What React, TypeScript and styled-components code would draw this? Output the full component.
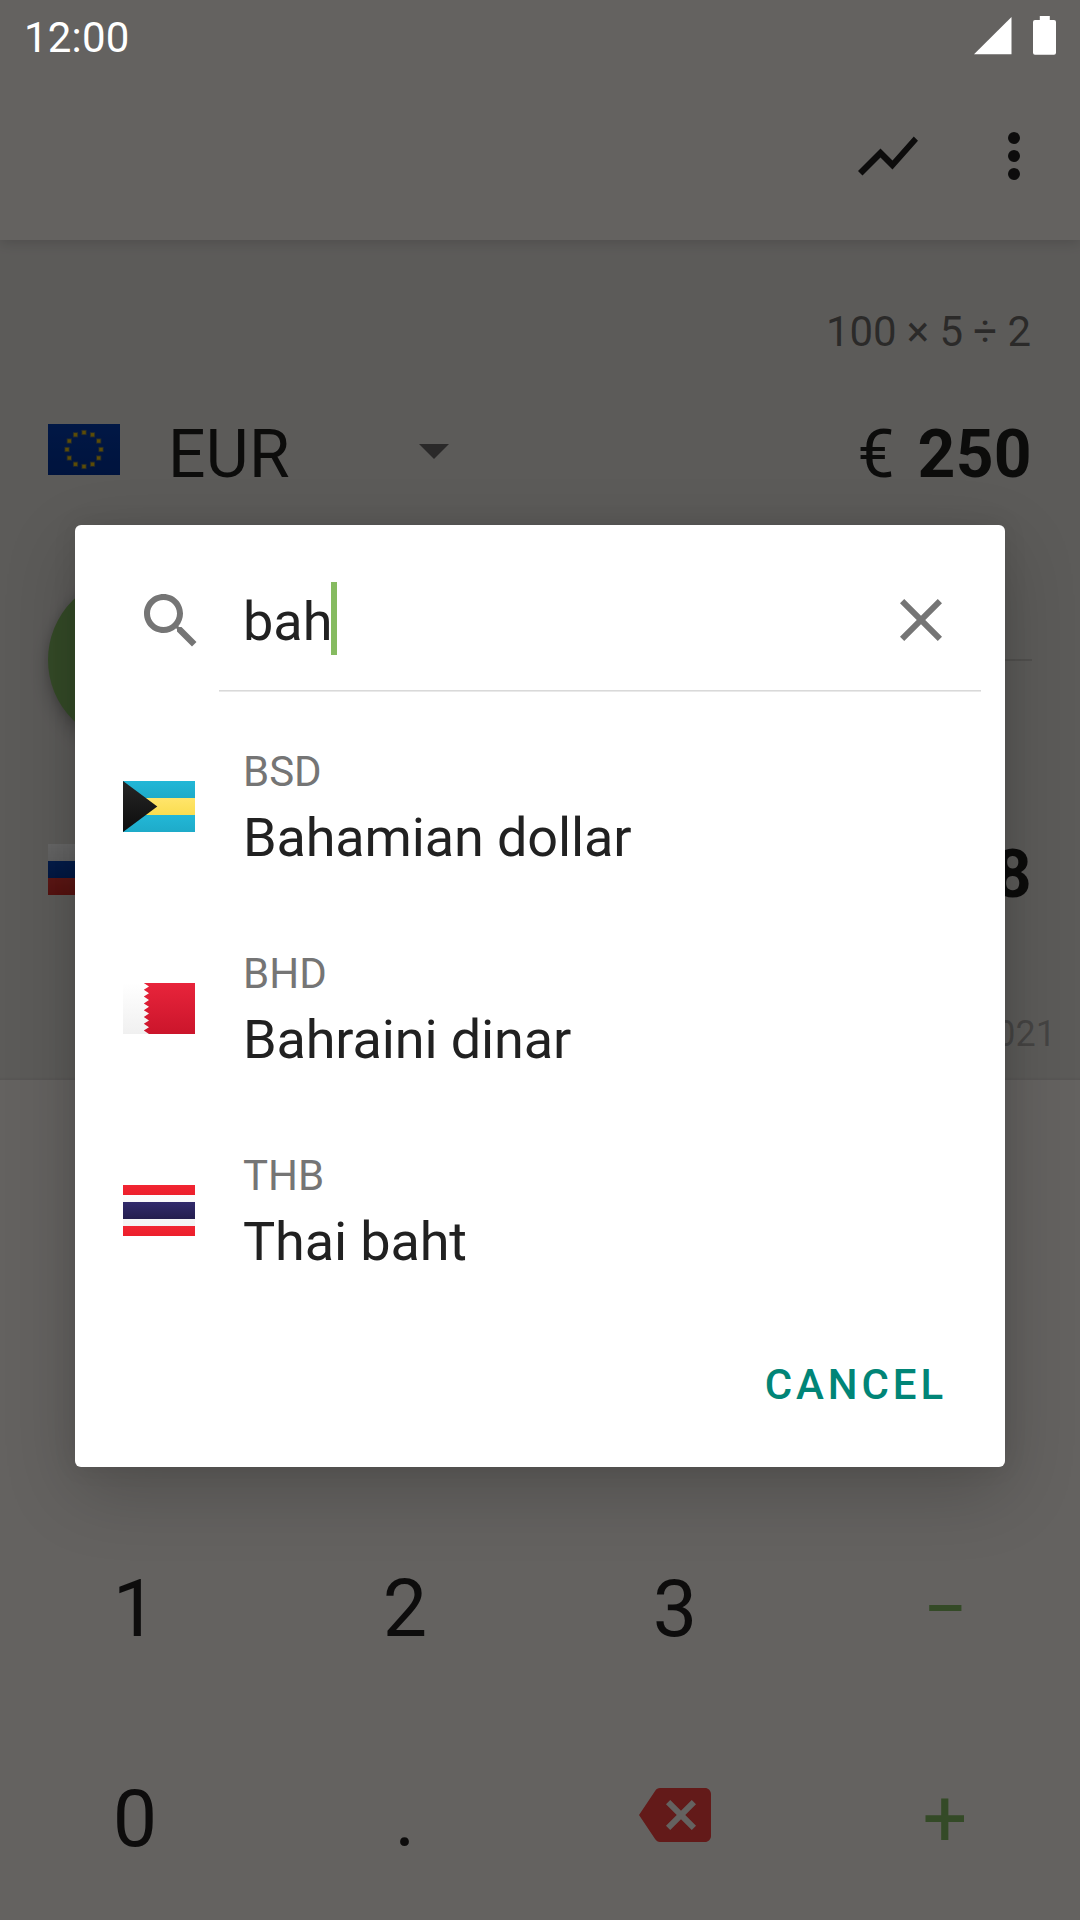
import React from "react";
import styled, { createGlobalStyle } from "styled-components";

const Global = createGlobalStyle`
  * { box-sizing: border-box; }
  body { margin: 0; font-family: Roboto, "Liberation Sans", sans-serif; }
`;

const Screen = styled.div`
  position: relative;
  width: 1080px;
  height: 1920px;
  overflow: hidden;
  display: flex;
  flex-direction: column;
  background: #faf6f1;
  color: rgba(0, 0, 0, 0.87);
`;

const Toolbar = styled.header`
  flex: none;
  height: 240px;
  padding: 120px 30px 48px;
  display: flex;
  justify-content: flex-end;
  gap: 54px;
  z-index: 1;
  background: #faf6f1;
  box-shadow: 0 3px 12px rgba(0, 0, 0, 0.14);
`;

const Icon = styled.svg<{ $size?: number; $color?: string }>`
  display: block;
  flex: none;
  width: ${(p) => p.$size ?? 72}px;
  height: ${(p) => p.$size ?? 72}px;
  fill: ${(p) => p.$color ?? "rgba(0, 0, 0, 0.87)"};
`;

const Converter = styled.section`
  flex: none;
  height: 840px;
  padding: 68px 48px 0;
  display: flex;
  flex-direction: column;
  background: #e6e3df;
  box-shadow: inset 0 -3px 3px -2px rgba(0, 0, 0, 0.08);
`;

const Expression = styled.div`
  height: 48px;
  margin-right: 1px;
  line-height: 48px;
  font-size: 42px;
  letter-spacing: -0.1px;
  text-align: right;
  color: rgba(0, 0, 0, 0.54);
`;

const CurrencyRow = styled.div<{ $top: number }>`
  display: flex;
  height: 78px;
  margin-top: ${(p) => p.$top}px;
  line-height: 81px;
  font-size: 66px;
`;

const FlagSvg = styled.svg<{ $top?: number }>`
  display: block;
  flex: none;
  width: 72px;
  height: 51px;
  margin-top: ${(p) => p.$top ?? 0}px;
`;

const Code = styled.span`
  width: 239px;
  margin-left: 48px;
  letter-spacing: 0.3px;
`;

const Amount = styled.span`
  margin-left: auto;
  display: flex;
  gap: 23px;
`;

const Bold = styled.b`
  font-weight: 700;
  letter-spacing: 0.3px;
`;

const SwapRow = styled.div`
  display: flex;
  align-items: center;
  height: 168px;
  margin-top: 84px;
`;

const SwapButton = styled.div`
  width: 168px;
  height: 168px;
  border-radius: 50%;
  background: #83b962;
  box-shadow: 0 9px 18px rgba(0, 0, 0, 0.24), 0 0 9px rgba(0, 0, 0, 0.1);
`;

const SwapDivider = styled.div`
  flex: 1;
  height: 2px;
  margin-left: 48px;
  background: rgba(0, 0, 0, 0.12);
`;

const UpdateDate = styled.div`
  margin: 101px -24px 0 0;
  height: 42px;
  line-height: 42px;
  font-size: 36px;
  text-align: right;
  color: rgba(0, 0, 0, 0.26);
`;

const Keypad = styled.div`
  flex: 1;
  display: grid;
  grid-template-columns: repeat(4, 270px);
  grid-auto-rows: 210px;
  align-content: end;
`;

const Key = styled.div<{ $accent?: boolean }>`
  display: flex;
  align-items: center;
  justify-content: center;
  padding-top: 8px;
  font-size: 79px;
  line-height: 94px;
  color: ${(p) => (p.$accent ? "#83b962" : "inherit")};
`;

const IconKey = styled(Key)`
  padding-top: 0;
`;

const Scrim = styled.div`
  position: absolute;
  inset: 0;
  z-index: 2;
  background: rgba(0, 0, 0, 0.6);
`;

const StatusBar = styled.div`
  position: absolute;
  inset: 0 0 auto 0;
  z-index: 3;
  height: 72px;
  padding: 13px 24px 0 24px;
  display: flex;
  justify-content: space-between;
  font-size: 42px;
  line-height: 49px;
  letter-spacing: 0.2px;
  color: #fff;
`;

const StatusIcons = styled.svg`
  display: block;
  width: 90px;
  height: 48px;
  fill: #fff;
`;

const Dialog = styled.div`
  position: absolute;
  left: 75px;
  top: 525px;
  z-index: 4;
  width: 930px;
  height: 942px;
  border-radius: 6px;
  display: flex;
  flex-direction: column;
  background: #fff;
  color: #212121;
  box-shadow: 0 24px 72px rgba(0, 0, 0, 0.2), 0 0 24px rgba(0, 0, 0, 0.08);
`;

const SearchRow = styled.div`
  display: flex;
  height: 165px;
  padding: 57px 48px 0 60px;
`;

const Query = styled.div`
  flex: 1;
  display: flex;
  height: 73px;
  margin-left: 36px;
  line-height: 80px;
  font-size: 54px;
`;

const Caret = styled.span`
  width: 6px;
  height: 73px;
  margin-left: -1px;
  background: #86bb60;
`;

const SearchIcon = styled(Icon)`
  margin-top: 3px;
`;

const ClearIcon = styled(Icon)`
  margin-top: 1.5px;
`;

const Rule = styled.div`
  height: 2px;
  margin: 0 24px 13px 144px;
  background: linear-gradient(#d9d9d9 50%, #e9e9e9 50%);
`;

const Item = styled.div`
  display: flex;
  align-items: center;
  height: 202px;
  padding-left: 48px;
  gap: 48px;
`;

const ItemText = styled.div`
  display: flex;
  flex-direction: column;
  padding-top: 4px;
`;

const ItemCode = styled.span`
  font-size: 42px;
  line-height: 50px;
  margin-bottom: 9px;
  color: #757575;
`;

const ItemName = styled.span`
  font-size: 54px;
  line-height: 64px;
  letter-spacing: -0.13px;
`;

const Actions = styled.div`
  display: flex;
  justify-content: flex-end;
  padding: 49px 58px 0 0;
`;

const Cancel = styled.span`
  font-size: 42px;
  line-height: 50px;
  font-weight: 500;
  letter-spacing: 3.9px;
  color: #018577;
`;

const Gradient = ({ id, from, to }: { id: string; from: string; to: string }) => (
  <linearGradient id={id} x1="0" y1="0" x2="0" y2="1">
    <stop offset="0" stopColor={from} />
    <stop offset="1" stopColor={to} />
  </linearGradient>
);

const EuFlag = () => (
  <FlagSvg viewBox="0 0 72 51" $top={10}>
    <defs>
      <Gradient id="eu" from="#043cae" to="#00319a" />
    </defs>
    <rect width="72" height="51" fill="url(#eu)" />
    {Array.from({ length: 12 }, (_, i) => {
      const a = (i * Math.PI) / 6;
      return (
        <g key={i} transform={`translate(${36 + 17 * Math.sin(a)} ${25.5 - 17 * Math.cos(a)})`}>
          <rect x="-2.6" y="-2.6" width="5.2" height="5.2" fill="#ffcc00" opacity="0.35" />
          <rect x="-1.7" y="-1.7" width="3.4" height="3.4" fill="#ffcc00" opacity="0.85" />
        </g>
      );
    })}
  </FlagSvg>
);

const RuFlag = () => (
  <FlagSvg viewBox="0 0 72 51" $top={10}>
    <defs>
      <Gradient id="ruw" from="#ffffff" to="#f0f0f0" />
      <Gradient id="rub" from="#0c47b7" to="#073da4" />
      <Gradient id="rur" from="#e53b35" to="#d32e28" />
    </defs>
    <rect width="72" height="17" fill="url(#ruw)" />
    <rect y="17" width="72" height="17" fill="url(#rub)" />
    <rect y="34" width="72" height="17" fill="url(#rur)" />
  </FlagSvg>
);

const BahamasFlag = () => (
  <FlagSvg viewBox="0 0 72 51">
    <defs>
      <Gradient id="bsc" from="#22b7d7" to="#1eabc9" />
      <Gradient id="bsy" from="#ffe56b" to="#fadd50" />
      <Gradient id="bsk" from="#262626" to="#0d0d0d" />
    </defs>
    <rect width="72" height="17" fill="url(#bsc)" />
    <rect y="17" width="72" height="17" fill="url(#bsy)" />
    <rect y="34" width="72" height="17" fill="url(#bsc)" />
    <path d="M0 0L34.3 25.5 0 51z" fill="url(#bsk)" />
  </FlagSvg>
);

const teeth = Array.from({ length: 7 }, (_, i) => `L26 ${3.4 + i * 6.8} L20.8 ${6.8 + i * 6.8}`).join(" ");

const BahrainFlag = () => (
  <FlagSvg viewBox="0 0 72 51">
    <defs>
      <Gradient id="bhw" from="#ffffff" to="#f0f0f0" />
      <Gradient id="bhr" from="#e8243b" to="#cb152b" />
    </defs>
    <rect width="72" height="51" fill="url(#bhw)" />
    <path d={`M72 0H20.8 ${teeth} L26 51 H72z`} fill="url(#bhr)" />
  </FlagSvg>
);

const ThaiFlag = () => (
  <FlagSvg viewBox="0 0 72 51">
    <defs>
      <Gradient id="thw" from="#ffffff" to="#f0f0f0" />
      <Gradient id="thr" from="#f12532" to="#ec1f2b" />
      <Gradient id="thb" from="#322b6c" to="#241e4e" />
    </defs>
    <rect width="72" height="51" fill="url(#thw)" />
    <rect width="72" height="10" fill="url(#thr)" />
    <rect y="17" width="72" height="17" fill="url(#thb)" />
    <rect y="41" width="72" height="10" fill="url(#thr)" />
  </FlagSvg>
);

const results = [
  { code: "BSD", name: "Bahamian dollar", Flag: BahamasFlag },
  { code: "BHD", name: "Bahraini dinar", Flag: BahrainFlag },
  { code: "THB", name: "Thai baht", Flag: ThaiFlag },
];

export default function App() {
  return (
    <>
      <Global />
      <Screen>
        <Toolbar>
          <Icon viewBox="0 0 24 24">
            <path d="M3.5 18.49l6-6.01 4 4L22 6.92l-1.41-1.41-7.09 7.97-4-4L2 16.99z" />
          </Icon>
          <Icon viewBox="0 0 24 24">
            <circle cx="12" cy="6" r="2" />
            <circle cx="12" cy="12" r="2" />
            <circle cx="12" cy="18" r="2" />
          </Icon>
        </Toolbar>

        <Converter>
          <Expression>100 × 5 ÷ 2</Expression>
          <CurrencyRow $top={58}>
            <EuFlag />
            <Code>EUR</Code>
            <Icon viewBox="0 0 24 24" $color="rgba(0, 0, 0, 0.54)">
              <path d="M4 10l5 5 5-5z" />
            </Icon>
            <Amount>
              <span>€</span>
              <Bold>250</Bold>
            </Amount>
          </CurrencyRow>
          <SwapRow>
            <SwapButton />
            <SwapDivider />
          </SwapRow>
          <CurrencyRow $top={90}>
            <RuFlag />
            <Amount>
              <Bold>8</Bold>
            </Amount>
          </CurrencyRow>
          <UpdateDate>2021</UpdateDate>
        </Converter>

        <Keypad>
          <Key>1</Key>
          <Key>2</Key>
          <Key>3</Key>
          <Key $accent>−</Key>
          <Key>0</Key>
          <Key>.</Key>
          <IconKey>
            <Icon viewBox="0 0 24 24" $color="#f7413f">
              <path d="M22 3H7c-.69 0-1.23.35-1.59.88L0 12l5.41 8.11c.36.53.9.89 1.59.89h15c1.1 0 2-.9 2-2V5c0-1.1-.9-2-2-2zm-3 12.59L17.59 17 14 13.41 10.41 17 9 15.59 12.59 12 9 8.41 10.41 7 14 10.59 17.59 7 19 8.41 15.41 12 19 15.59z" />
            </Icon>
          </IconKey>
          <Key $accent>+</Key>
        </Keypad>

        <Scrim />

        <StatusBar>
          <span>12:00</span>
          <StatusIcons viewBox="0 0 90 48">
            <path d="M8 41.3L45.5 4v37.3z" />
            <path d="M73.8 3h10v4h4.2a2 2 0 0 1 2 2v30.7a2 2 0 0 1-2 2H69a2 2 0 0 1-2-2V9a2 2 0 0 1 2-2h4.8z" />
          </StatusIcons>
        </StatusBar>

        <Dialog>
          <SearchRow>
            <SearchIcon viewBox="0 0 24 24" $color="#757575">
              <path d="M15.5 14h-.79l-.28-.27C15.41 12.59 16 11.11 16 9.5 16 5.91 13.09 3 9.5 3S3 5.91 3 9.5 5.91 16 9.5 16c1.61 0 3.09-.59 4.23-1.57l.27.28v.79l5 4.99L20.49 19l-4.99-5zm-6 0C7.01 14 5 11.99 5 9.5S7.01 5 9.5 5 14 7.01 14 9.5 11.99 14 9.5 14z" />
            </SearchIcon>
            <Query>
              <span>bah</span>
              <Caret />
            </Query>
            <ClearIcon viewBox="0 0 24 24" $color="#757575">
              <path d="M19 6.41L17.59 5 12 10.59 6.41 5 5 6.41 10.59 12 5 17.59 6.41 19 12 13.41 17.59 19 19 17.59 13.41 12z" />
            </ClearIcon>
          </SearchRow>
          <Rule />
          {results.map(({ code, name, Flag }) => (
            <Item key={code}>
              <Flag />
              <ItemText>
                <ItemCode>{code}</ItemCode>
                <ItemName>{name}</ItemName>
              </ItemText>
            </Item>
          ))}
          <Actions>
            <Cancel>CANCEL</Cancel>
          </Actions>
        </Dialog>
      </Screen>
    </>
  );
}
